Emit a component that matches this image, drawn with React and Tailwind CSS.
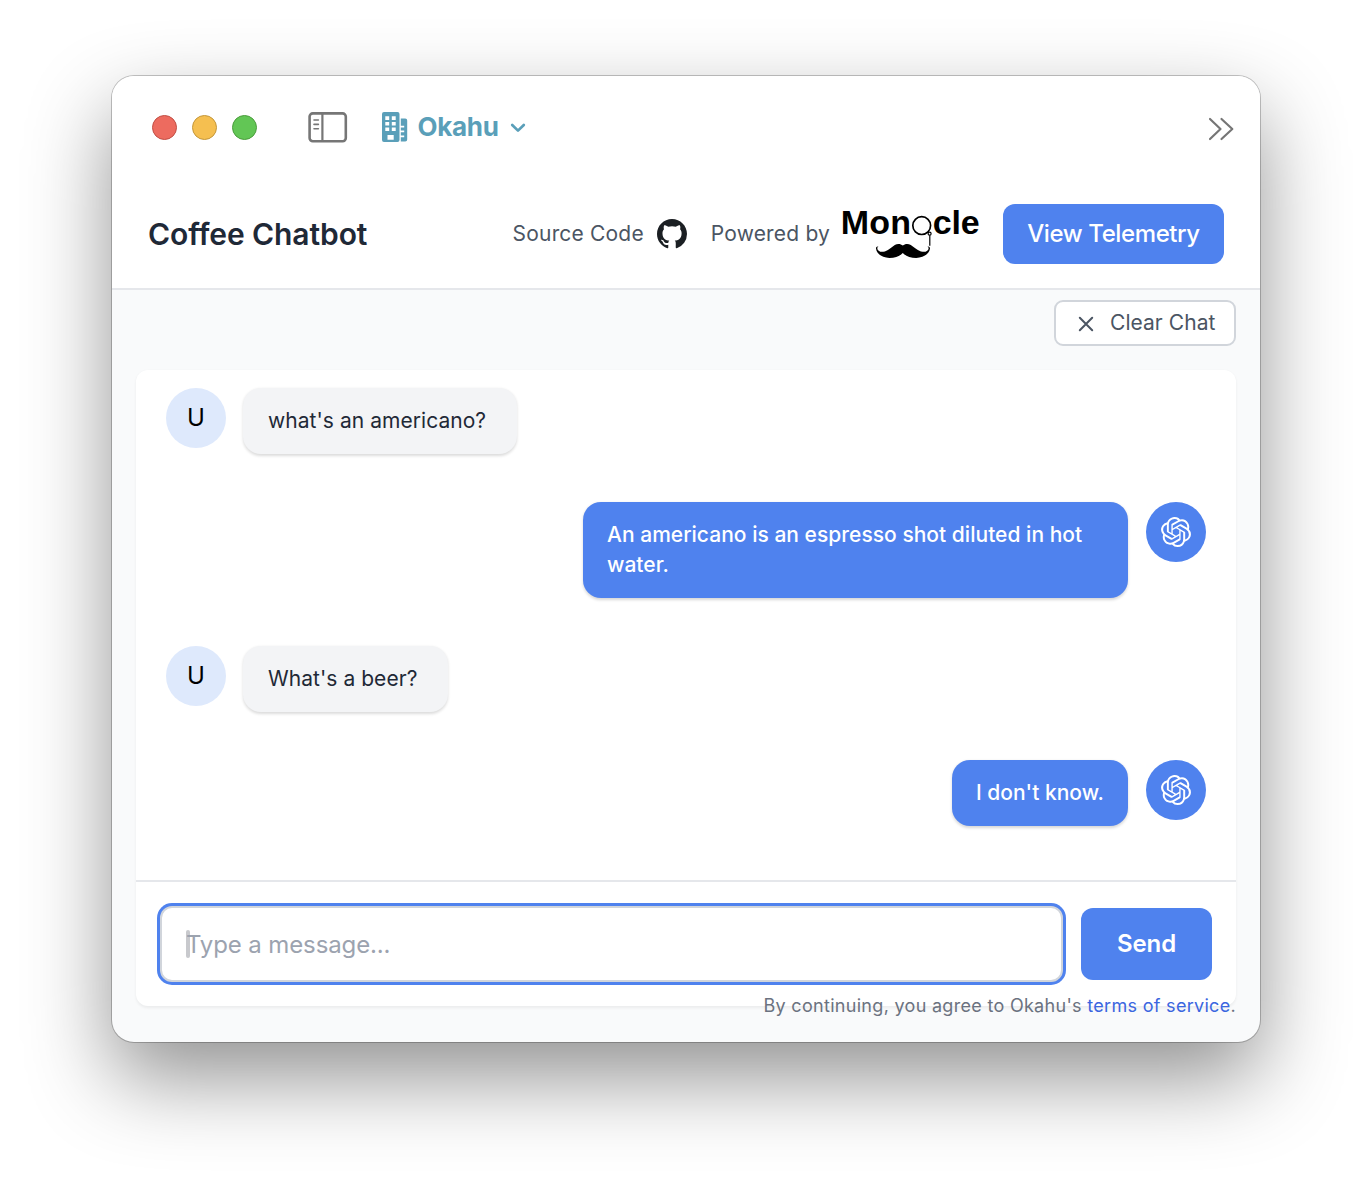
import { SiOpenai } from "react-icons/si";

const messages = [
  { from: "user", text: "what's an americano?" },
  { from: "bot", text: "An americano is an espresso shot diluted in hot water." },
  { from: "user", text: "What's a beer?" },
  { from: "bot", text: "I don't know." },
];

function SidebarIcon() {
  return (
    <svg className="mb-px ml-[51px] h-[31px] w-[40px]" viewBox="0 0 40 31" fill="none" stroke="#767676">
      <rect x="1.6" y="1.4" width="36.2" height="27.8" rx="3.2" strokeWidth="2.6" />
      <path d="M14.4 1.5v28" strokeWidth="2.2" />
      <path d="M6 8h4.400M6 12.400h4.400M6 16.800h4.400" strokeWidth="1.600" strokeLinecap="round" />
    </svg>
  );
}

function BuildingIcon() {
  return (
    <svg className="mb-[2px] ml-[34.500px] h-[30px] w-[26px]" viewBox="0 0 26 30">
      <path
        fill="#5a9fb9"
        fillRule="evenodd"
        d="M2 0h13.500a2 2 0 0 1 2 2v26a2 2 0 0 1-2 2H2a2 2 0 0 1-2-2V2a2 2 0 0 1 2-2zM3.300 4.300v3.600h3.900V4.300zM9.800 4.300v3.600h3.900V4.300zM3.300 10v3.600h3.900V10zM9.800 10v3.600h3.900V10zM3.300 15.400V19h3.900v-3.600zM9.800 15.400V19h3.900v-3.600zM5.500 23v4.800h6.200V23z"
      />
      <path
        fill="#5a9fb9"
        d="M18.800 6.500h4.400a2 2 0 0 1 2 2V27.600a2 2 0 0 1-2 2h-4.400v-4.400h3.400v-1.700h-3.400v-3.200h3.400v-1.700h-3.400v-3.200h3.400v-1.700h-3.400z"
      />
    </svg>
  );
}

function GithubIcon() {
  return (
    <svg className="ml-[13px] size-[30px]" viewBox="0 0 16 16" fill="#1b1f23">
      <path d="M8 0C3.58 0 0 3.58 0 8c0 3.54 2.29 6.53 5.47 7.59.4.07.55-.17.55-.38 0-.19-.01-.82-.01-1.49-2.01.37-2.53-.49-2.69-.94-.09-.23-.48-.94-.82-1.13-.28-.15-.68-.52-.01-.53.63-.01 1.08.58 1.23.82.72 1.21 1.87.87 2.33.66.07-.52.28-.87.51-1.07-1.78-.2-3.64-.89-3.64-3.95 0-.87.31-1.59.82-2.15-.08-.2-.36-1.02.08-2.12 0 0 .67-.21 2.2.82.64-.18 1.32-.27 2-.27.68 0 1.36.09 2 .27 1.53-1.04 2.2-.82 2.2-.82.44 1.1.16 1.92.08 2.12.51.56.82 1.27.82 2.15 0 3.07-1.87 3.75-3.65 3.95.29.25.54.73.54 1.48 0 1.07-.01 1.93-.01 2.2 0 .21.15.46.55.38A8.013 8.013 0 0016 8c0-4.42-3.58-8-8-8z" />
    </svg>
  );
}

function MonocleLogo() {
  return (
    <svg className="ml-[6px] h-[68px] w-[148px] overflow-visible" viewBox="836 200 148 68">
      <g fontFamily='"Liberation Sans", Arial, sans-serif' fontWeight="700" fontSize="34" fill="#000">
        <text x="840.700" y="234">Mon</text>
        <text x="932.800" y="234" letterSpacing="-0.200">cle</text>
      </g>
      <g fill="none" stroke="#000">
        <circle cx="921.7" cy="225.6" r="8.9" strokeWidth="1.7" />
        <circle cx="929.6" cy="233.7" r="1.5" strokeWidth="1.200" fill="#fff" />
        <path d="M929.800 235.200v10.500" strokeWidth="1.200" />
      </g>
      <path d="M902.800 245.600c-2-1.900-5.300-2.300-8-.6-3.600 2.200-7 6.200-11.600 6.800-3.300.4-5.900-1.300-5.900-3.600 0-.9.500-1.300 1.300-1.200-.9-1.300-2.800-.4-2.600 1.600.5 5.200 6.200 9.300 13.400 9.300 5.800 0 10.300-1.700 13.400-5 3.100 3.300 7.600 5 13.400 5 7.200 0 13.200-4.100 13.800-9.300.2-2-1.800-2.900-2.700-1.600.8-.1 1.300.3 1.300 1.200 0 2.300-2.600 4-5.900 3.600-4.600-.6-8.300-4.600-11.900-6.800-2.700-1.700-6-1.300-8 .6z" />
    </svg>
  );
}

function Message({ from, text }) {
  if (from === "user") {
    return (
      <div className="flex items-start">
        <div className="flex size-[60px] shrink-0 items-center justify-center rounded-full bg-[#dee9fc] text-[24px] text-black">
          U
        </div>
        <div className="ml-[17px] rounded-[18px] bg-[#f3f4f6] py-[18px] pr-[31px] pl-[25px] text-[21px] leading-[30px] tracking-[0.05px] text-[#1f2937] shadow-[0_1.5px_3px_rgba(0,0,0,0.14)]">
          {text}
        </div>
      </div>
    );
  }
  return (
    <div className="flex items-start justify-end">
      <div className="max-w-[545px] rounded-[18px] bg-[#4f82ee] px-[24px] py-[18px] text-[21px] leading-[30px] font-medium tracking-[0.02px] text-white shadow-[0_1.5px_3px_rgba(0,0,0,0.16)]">
        {text}
      </div>
      <div className="ml-[18px] flex size-[60px] shrink-0 items-center justify-center rounded-full bg-[#4f82ee]">
        <SiOpenai className="size-[30px] text-white" />
      </div>
    </div>
  );
}

export default function App() {
  return (
    <div className="h-[1190px] w-[1372px] overflow-hidden bg-white pt-[76px] pl-[112px] font-['Inter',sans-serif]">
      <main className="flex h-[966px] w-[1148px] flex-col overflow-hidden rounded-[22px] bg-[#f9fafb] shadow-[0_0_0_1px_rgba(0,0,0,0.22),0_36px_84px_rgba(0,0,0,0.43)]">
        <div className="flex h-[103px] shrink-0 items-center bg-white pl-[39.500px]">
          <div className="flex gap-[15px]">
            <span className="size-[25px] rounded-full border border-[#c14e44] bg-[#ed6b5f]" />
            <span className="size-[25px] rounded-full border border-[#c4973a] bg-[#f5bf50]" />
            <span className="size-[25px] rounded-full border border-[#4a9c3c] bg-[#62c655]" />
          </div>
          <SidebarIcon />
          <BuildingIcon />
          <span className="mb-[2px] ml-[9.500px] text-[26px] font-bold tracking-[-0.3px] text-[#5a9fb9]">Okahu</span>
          <svg className="ml-[11.500px] h-[10px] w-[16px]" viewBox="0 0 16 10" fill="none" stroke="#5a9fb9" strokeWidth="2.7" strokeLinecap="round" strokeLinejoin="round">
            <path d="M2.200 2 8 7.600 13.800 2" />
          </svg>
          <svg className="mt-[3px] mr-[26px] ml-auto h-[24px] w-[26px]" viewBox="0 0 26 24" fill="none" stroke="#767676" strokeWidth="2.200" strokeLinecap="round" strokeLinejoin="round">
            <path d="M2 2 12.500 12 2 22M13.500 2 24.300 12 13.500 22" />
          </svg>
        </div>

        <header className="flex h-[111px] shrink-0 items-center border-b-2 border-[#e5e7eb] bg-white pr-[36px] pl-[36px]">
          <h1 className="mt-[2px] text-[30px] font-semibold tracking-[-0.1px] text-[#1f2937]">Coffee Chatbot</h1>
          <div className="ml-auto flex items-center text-[21px] tracking-[0.18px] text-[#4b5563]">
            <span>Source Code</span>
            <GithubIcon />
            <span className="ml-[24px]">Powered by</span>
            <MonocleLogo />
            <button className="ml-[19px] h-[60px] w-[221px] rounded-[12px] bg-[#4f82ee] text-[24px] font-medium tracking-[-0.4px] text-white">
              View Telemetry
            </button>
          </div>
        </header>

        <div className="flex grow flex-col px-[24px] pt-[10px]">
          <button className="flex h-[46px] w-[182px] items-center self-end rounded-[9px] border-2 border-[#d1d5db] bg-white pl-[22px] text-[21px] text-[#4b5563]">
            <svg className="mt-px size-[16px]" viewBox="0 0 16 16" fill="none" stroke="#4b5563" strokeWidth="2" strokeLinecap="round">
              <path d="M1.800 1.800l12.400 12.400M14.200 1.800l-12.400 12.400" />
            </svg>
            <span className="ml-[16px] tracking-[0.050px]">Clear Chat</span>
          </button>

          <section className="mt-[24px] flex h-[636px] flex-col rounded-[12px] bg-white shadow-[0_1.5px_3px_rgba(0,0,0,0.06)]">
            <div className="flex h-[510px] flex-col gap-[48px] px-[30px] pt-[18px]">
              {messages.map((m) => (
                <Message key={m.text} from={m.from} text={m.text} />
              ))}
            </div>
            <form className="flex items-center border-t-2 border-[#e5e7eb] pt-[24px] pl-[24px]">
              <div className="flex h-[76px] w-[903px] items-center rounded-[12px] border-2 border-[#d1d5db] bg-white pl-[24px] text-[24px] text-[#9ca3af] ring-[3px] ring-[#4f82ee]">
                <span className="-mr-[4px] h-[28px] w-[4px] rounded-full bg-[#c8c9cd]" />
                <span className="mt-[2px] tracking-[-0.12px]">Type a message...</span>
              </div>
              <button type="button" className="ml-[18px] h-[72px] w-[131px] rounded-[12px] bg-[#4f82ee] text-[24px] font-semibold tracking-[-0.1px] text-white">
                Send
              </button>
            </form>
          </section>
          <p className="-mt-[12px] text-right text-[18px] leading-[24px] tracking-[0.3px] text-[#6b7280]">
            By continuing, you agree to Okahu's <span className="text-[#3b66e0]">terms of service</span>.
          </p>
        </div>
      </main>
    </div>
  );
}
